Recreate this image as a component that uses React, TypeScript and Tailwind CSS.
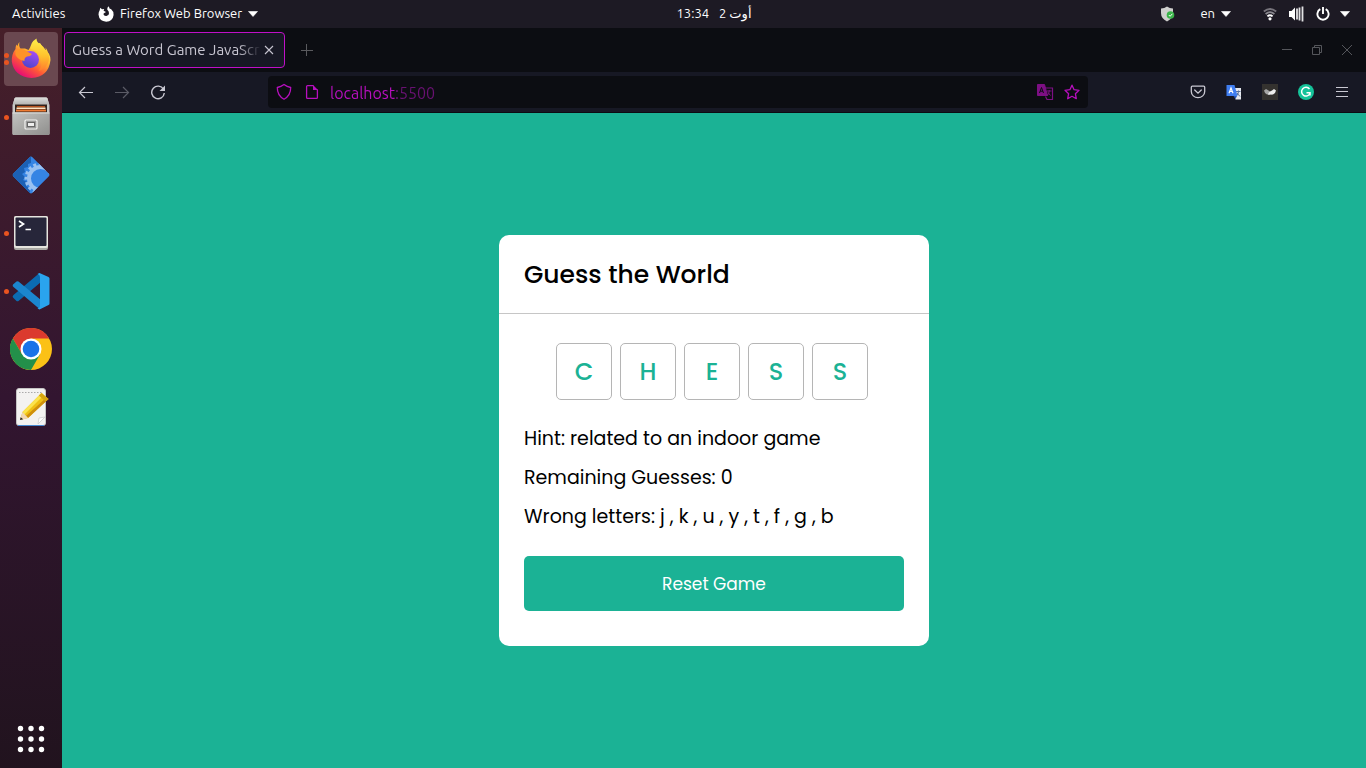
import React from "react";

const word = ["C", "H", "E", "S", "S"];
const wrongLetters = ["j", "k", "u", "y", "t", "f", "g", "b"];

function Caret() {
  return (
    <svg width="10" height="6" viewBox="0 0 10 6" aria-hidden="true">
      <path d="M0.5 0.5h9L5 5.5z" fill="#fff" stroke="#fff" strokeWidth="0.6" />
    </svg>
  );
}

function FirefoxGlyph() {
  return (
    <svg width="16" height="16" viewBox="0 0 16 16" aria-hidden="true">
      <path
        fill="#fff"
        d="M2.3 1.8 4 3.3 6.2 3 5.6 4.7 8 6 6 7.2Q5.2 7.5 5.7 8.7 6.5 10.2 8.4 10.1 11 9.8 11 7.2 11 5.2 9.3 3.8 9 2 10.3 0.2 11.5 1.5 11.7 2.7L13 3.1Q15.8 5.4 15.6 9 14.8 15.2 8.2 15.8 1.2 15.4 0.5 8.6 0.5 6 1.7 4.3z"
      />
    </svg>
  );
}

function FirefoxLogo() {
  return (
    <svg width="42" height="42" viewBox="0 0 42 42" aria-hidden="true">
      <defs>
        <linearGradient id="fxBody" x1="0.85" y1="0.1" x2="0.25" y2="0.95">
          <stop offset="0" stopColor="#fff44f" />
          <stop offset="0.35" stopColor="#ffb22e" />
          <stop offset="0.65" stopColor="#ff5a36" />
          <stop offset="1" stopColor="#e60a76" />
        </linearGradient>
        <linearGradient id="fxTail" x1="0.5" y1="0" x2="0.5" y2="1">
          <stop offset="0" stopColor="#fff14a" />
          <stop offset="0.55" stopColor="#ffc02c" />
          <stop offset="1" stopColor="#ff7a2e" />
        </linearGradient>
        <linearGradient id="fxGlobe" x1="0.7" y1="0" x2="0.3" y2="1">
          <stop offset="0" stopColor="#a64cf5" />
          <stop offset="1" stopColor="#4b45c9" />
        </linearGradient>
      </defs>
      <path
        d="M9.500 4Q8.500 8 10.500 10.500L15 10.500 18.500 12 21 8 30 5 34 11Q40.500 15 40.500 22 38.500 39 21.500 40 4 38.500 1.800 23.500 1.500 16 5.500 11 5.500 8.500 6.500 6.500L7.500 8Q8 5.500 9.500 4z"
        fill="url(#fxBody)"
      />
      <path
        d="M26.500 0.500Q20 4.500 20.500 11 29 12 31.500 20 33 27 28.500 33 37 31 39 22 39.500 15 35.500 9.500L36 12.500Q33 8 30 6 26.500 4 26.500 0.500z"
        fill="url(#fxTail)"
      />
      <circle cx="20.500" cy="21.500" r="8.500" fill="url(#fxGlobe)" />
      <path d="M5.500 12Q12 9.500 17 13.500L22 16Q20.500 18.500 17 18.500 14 19.500 14.500 23 8 22 5.500 17z" fill="#ff9328" />
    </svg>
  );
}

function FilesLogo() {
  return (
    <svg width="42" height="42" viewBox="0 0 42 42" aria-hidden="true">
      <defs>
        <linearGradient id="cabTop" x1="0" y1="0" x2="0" y2="1">
          <stop offset="0" stopColor="#dededc" />
          <stop offset="1" stopColor="#b4b4b2" />
        </linearGradient>
        <linearGradient id="cabFront" x1="0" y1="0" x2="1" y2="1">
          <stop offset="0" stopColor="#c2c2c0" />
          <stop offset="1" stopColor="#8f8f8d" />
        </linearGradient>
      </defs>
      <path d="M4.500 2.500q0.300-1 1.500-1h30q1.200 0 1.500 1L39.500 9v28.500q0 1.500-1.500 1.500H4q-1.500 0-1.500-1.500V9z" fill="#c9c9c7" />
      <path d="M4.500 2.500q0.300-1 1.500-1h30q1.200 0 1.500 1L39 8.500H3z" fill="url(#cabTop)" />
      <path d="M5 8.500h32v8H5z" fill="#33231d" />
      <path d="M7 10h28v1.500H7z" fill="#b8541f" />
      <path d="M6.500 11.500h29V13h-29z" fill="#ffe3c0" />
      <path d="M6 13.500h30v2H6z" fill="#ef7b33" />
      <path d="M2.500 16.500h37v21q0 1.500-1.500 1.500H4q-1.500 0-1.500-1.500z" fill="url(#cabFront)" />
      <path d="M2.500 16.500h37v1h-37z" fill="#dededc" />
      <rect x="15" y="24" width="12" height="9" rx="1" fill="#999" stroke="#f4f4f2" strokeWidth="1.200" />
      <rect x="17.500" y="26.500" width="7" height="4" fill="#eee" stroke="#666" />
    </svg>
  );
}

function GearDiamondLogo() {
  return (
    <svg width="42" height="42" viewBox="0 0 42 42" aria-hidden="true">
      <defs>
        <clipPath id="diamond">
          <rect x="7.500" y="7.500" width="27" height="27" rx="2" transform="rotate(45 21 21)" />
        </clipPath>
      </defs>
      <g clipPath="url(#diamond)">
        <rect width="42" height="42" fill="#3584e4" />
        <path d="M0 0h21v9l-3 1v3l-4 1 1 4-3 2 3 3-2 3 4 2-1 4 4 2v8H0z" fill="#1c61b5" />
        <circle cx="30.500" cy="24.500" r="11.500" fill="none" stroke="#99c1f1" strokeWidth="4" />
        <circle cx="30.500" cy="24.500" r="14.500" fill="none" stroke="#99c1f1" strokeWidth="3" strokeDasharray="3 2.500" />
      </g>
    </svg>
  );
}

function TerminalLogo() {
  return (
    <svg width="42" height="42" viewBox="0 0 42 42" aria-hidden="true">
      <rect x="4" y="4" width="34" height="34" rx="2" fill="#aaa9a4" />
      <rect x="4" y="4" width="34" height="32" rx="2" fill="#e6e5df" />
      <rect x="5.500" y="5.500" width="31" height="28.500" rx="1" fill="#27263a" />
      <path d="M9 9 13.500 12 9 15M15.500 17.500h5.500" fill="none" stroke="#fff" strokeWidth="1.700" />
    </svg>
  );
}

function CodeLogo() {
  return (
    <svg width="42" height="42" viewBox="0 0 42 42" aria-hidden="true">
      <path d="M6.500 31 3 27.500Q2 26 3.500 25L29.500 3 31 12 8.500 31Q7.500 31.500 6.500 31z" fill="#0b6bb1" />
      <path d="M6.500 11.500 3 14.500Q2 16 3.500 17L29.500 39 31 30 8.500 11.500Q7.500 11 6.500 11.500z" fill="#1b86cf" />
      <path d="M29.500 3 38.500 7q1 0.500 1 1.500v25q0 1-1 1.500L29.500 39.500 27.500 38.500Q30 38 30 34.500V8Q30 4.500 27.500 4z" fill="#2aa4ee" />
    </svg>
  );
}

function ChromeLogo() {
  return (
    <svg width="42" height="42" viewBox="0 0 42 42" aria-hidden="true">
      <circle cx="21" cy="21" r="21" fill="#fbc116" />
      <path d="M2.800 10.500A21 21 0 0 1 39.200 10.500L21 10.500 12 26.300z" fill="#db3a2e" />
      <path d="M2.800 10.500A21 21 0 0 0 21 42L30.100 26.300 21 21 12 26.300z" fill="#23904a" />
      <circle cx="21" cy="21" r="10.500" fill="#fff" />
      <circle cx="21" cy="21" r="8.300" fill="#1a73e8" />
    </svg>
  );
}

function NotesLogo() {
  return (
    <svg width="42" height="42" viewBox="0 0 42 42" aria-hidden="true">
      <rect x="6.500" y="2.500" width="29" height="37" rx="2.500" fill="#f3f2f1" stroke="#c5c4c4" />
      <path d="M8 39.500h26" stroke="#4688d1" />
      <path d="M9 6.500h24" stroke="#aaa" strokeDasharray="1.500 1.500" />
      <path d="M28 38l1-6 6-1z" fill="#fff" stroke="#c8c8c8" strokeWidth="0.700" />
      <path d="M31.500 7 38.500 13 18 32 10 34 12.500 26z" fill="#efbf14" />
      <path d="M31.500 7 34 9 14.500 28.500 12.500 26z" fill="#fbe34c" />
      <path d="M36.500 11.500 38.500 13 18 32 16 30z" fill="#cf8f0d" />
      <path d="M31.500 7 38.500 13 35.500 15.500 28.800 9.500z" fill="#d7a611" />
      <path d="M12.500 26 18 32 10 34z" fill="#f0d6b5" />
      <path d="M10.700 31.300 13.200 33.200 10 34z" fill="#222" />
    </svg>
  );
}

const dock = [
  { name: "Firefox Web Browser", Logo: FirefoxLogo, windows: 2 },
  { name: "Files", Logo: FilesLogo, windows: 1 },
  { name: "Package tool", Logo: GearDiamondLogo, windows: 0 },
  { name: "Terminal", Logo: TerminalLogo, windows: 1 },
  { name: "Visual Studio Code", Logo: CodeLogo, windows: 1 },
  { name: "Google Chrome", Logo: ChromeLogo, windows: 0 },
  { name: "Text Editor", Logo: NotesLogo, windows: 0 },
];

function TopBar() {
  return (
    <header className="flex h-7 shrink-0 items-center bg-[#1d1a24] text-[13px] text-white">
      <div className="w-[62px]">
        <button className="pl-3">Activities</button>
      </div>
      <div className="flex flex-1 basis-0">
        <button className="ml-9 flex items-center gap-1.5">
          <FirefoxGlyph />
          <span>Firefox Web Browser</span>
          <Caret />
        </button>
      </div>
      <button className="flex gap-2.5">
        <span>13:34</span>
        <span>2 أوت</span>
      </button>
      <div className="flex flex-1 basis-0 items-center justify-end">
        <svg className="mr-6" width="16" height="16" viewBox="0 0 16 16" aria-hidden="true">
          <path d="M7 0.500Q9.500 2.500 13 2.500V7q0 5.500-6 8.500Q1 12.500 1 7V2.500Q4.500 2.500 7 0.500z" fill="#cfcfcd" />
          <circle cx="10.500" cy="9" r="3.800" fill="#3bb54a" />
          <path d="M8.800 9 10.100 10.300 12.400 7.800" fill="none" stroke="#fff" />
        </svg>
        <button className="mr-8 flex items-center gap-1.5">
          <span>en</span>
          <Caret />
        </button>
        <button className="mr-4 flex items-center gap-2.5" aria-label="System menu">
          <span className="flex items-center gap-3">
            <svg width="14" height="14" viewBox="0 0 14 14" aria-hidden="true">
              <path d="M0.800 4.500Q7 -0.500 13.200 4.500" fill="none" stroke="#77747c" strokeWidth="1.800" />
              <path d="M2.600 7Q7 3.200 11.400 7" fill="none" stroke="#8b8990" strokeWidth="1.800" />
              <path d="M4.400 9.400Q7 7 9.600 9.400" fill="none" stroke="#fff" strokeWidth="1.800" />
              <circle cx="7" cy="11.800" r="1.600" fill="#fff" />
            </svg>
            <svg width="15" height="16" viewBox="0 0 15 16" aria-hidden="true">
              <path d="M0 5h2.500L6 1.500v13L2.500 11H0z" fill="#fff" />
              <path d="M8 2.500v11M10.500 1.500v13M13.500 0.500v15" stroke="#e2e2e4" strokeWidth="1.800" />
            </svg>
            <svg width="14" height="14" viewBox="0 0 14 14" aria-hidden="true">
              <path d="M4.300 2.200A5.600 5.600 0 1 0 9.700 2.200M7 0v7" fill="none" stroke="#fff" strokeWidth="1.900" />
            </svg>
          </span>
          <Caret />
        </button>
      </div>
    </header>
  );
}

function Dock() {
  return (
    <nav
      aria-label="Dock"
      className="flex w-[62px] shrink-0 flex-col items-start gap-1 bg-linear-to-b from-[#461f29] via-[#321530] to-[#21131e] px-1 pt-1 pb-0.5"
    >
      {dock.map(({ name, Logo, windows }, i) => (
        <button
          key={name}
          aria-label={name}
          className={
            i === 0
              ? "relative flex size-[54px] items-center justify-center rounded bg-[#6a4850]"
              : "relative flex size-[54px] items-center justify-center rounded"
          }
        >
          <span className="absolute inset-y-0 left-0 flex flex-col items-center justify-center gap-0.5">
            {Array.from({ length: windows }, (_, n) => (
              <span key={n} className="size-[5px] rounded-full bg-[#e95420]" />
            ))}
          </span>
          <Logo />
        </button>
      ))}
      <button aria-label="Show Applications" className="mt-auto flex size-[54px] items-center justify-center">
        <svg width="28" height="28" viewBox="0 0 28 28" fill="#fff" aria-hidden="true">
          {[3.5, 14, 24.5].map((y) =>
            [3.5, 14, 24.5].map((x) => <circle key={`${x}-${y}`} cx={x} cy={y} r="2.700" />)
          )}
        </svg>
      </button>
    </nav>
  );
}

function TabStrip() {
  return (
    <div className="flex h-11 shrink-0 items-center bg-[#0c0d12] pl-0.5 text-[15px]">
      <div className="flex h-9 w-[221px] items-center rounded border border-[#c010c8] bg-[#171824] pl-[7px] text-[#c7c5d0]">
        <span className="w-[189px] overflow-hidden pt-px whitespace-nowrap mask-r-from-88% mask-r-to-100%">
          Guess a Word Game JavaScript
        </span>
        <button aria-label="Close tab" className="flex size-4 items-center justify-center">
          <svg width="10" height="10" viewBox="0 0 10 10" stroke="#c7c5d0" strokeWidth="1.100" aria-hidden="true">
            <path d="M1 1l8 8M9 1l-8 8" />
          </svg>
        </button>
      </div>
      <button aria-label="New tab" className="ml-3.5 flex size-4 items-center justify-center">
        <svg width="12" height="12" viewBox="0 0 12 12" stroke="#5a5a5e" aria-hidden="true">
          <path d="M5.500 0v12M0 6.500h12" />
        </svg>
      </button>
      <div className="ml-auto flex items-center gap-5 pr-3.5">
        <button aria-label="Minimize">
          <svg width="10" height="10" viewBox="0 0 10 10" stroke="#55565b" aria-hidden="true">
            <path d="M0 4.500h10" />
          </svg>
        </button>
        <button aria-label="Restore">
          <svg width="10" height="10" viewBox="0 0 10 10" fill="none" stroke="#55565b" aria-hidden="true">
            <path d="M0.500 2.500h7v7h-7zM2.500 2.500v-2h7v7h-2" />
          </svg>
        </button>
        <button aria-label="Close">
          <svg width="10" height="10" viewBox="0 0 10 10" stroke="#55565b" aria-hidden="true">
            <path d="M0 0l10 10M10 0L0 10" />
          </svg>
        </button>
      </div>
    </div>
  );
}

function ToolButton({ label, children }: { label: string; children: React.ReactNode }) {
  return (
    <button aria-label={label} className="flex h-8 w-9 items-center justify-center">
      {children}
    </button>
  );
}

function Toolbar() {
  return (
    <div className="flex h-[41px] shrink-0 items-center border-b border-[#0b0c12] bg-[#171824] px-1.5">
      <ToolButton label="Back">
        <svg width="16" height="16" viewBox="0 0 16 16" fill="none" stroke="#c9c8d2" strokeWidth="1.200" aria-hidden="true">
          <path d="M15 8.500H1.500M7 3 1.500 8.500 7 14" />
        </svg>
      </ToolButton>
      <ToolButton label="Forward">
        <svg width="16" height="16" viewBox="0 0 16 16" fill="none" stroke="#5b5b66" strokeWidth="1.200" aria-hidden="true">
          <path d="M1 8.500h13.500M9 3l5.500 5.500L9 14" />
        </svg>
      </ToolButton>
      <ToolButton label="Reload">
        <svg width="16" height="16" viewBox="0 0 16 16" fill="none" stroke="#c9c8d2" strokeWidth="1.400" aria-hidden="true">
          <path d="M13.500 5.300A6.300 6.300 0 1 0 14.300 9" />
          <path d="M15 1.500v5.500H9.500z" fill="#c9c8d2" stroke="none" />
        </svg>
      </ToolButton>

      <div className="mx-[92px] flex h-8 flex-1 items-center rounded bg-[#0c0d12] px-2 text-[#b80fbf]">
        <svg width="16" height="18" viewBox="0 0 16 18" fill="none" stroke="currentColor" strokeWidth="1.300" aria-hidden="true">
          <path d="M8 1.500Q11 3.800 14.700 4.500 14.800 12.500 8 16.200 1.200 12.500 1.300 4.500 5 3.800 8 1.500z" strokeLinejoin="round" />
        </svg>
        <svg className="ml-3" width="16" height="16" viewBox="0 0 16 16" fill="none" stroke="currentColor" strokeWidth="1.300" aria-hidden="true">
          <path d="M9.500 1.600H3.500q-0.900 0-0.900 0.900v11q0 0.900 0.900 0.900h9q0.900 0 0.900-0.900V5.500" />
          <path d="M9 1l5 5H9z" fill="currentColor" stroke="none" />
        </svg>
        <input
          aria-label="Address"
          defaultValue="localhost:5500"
          spellCheck={false}
          className="ml-2.5 h-6 min-w-0 flex-1 bg-linear-to-r from-[#b80fbf] from-[65px] to-[#6a1173] to-[65px] bg-clip-text pt-px text-base text-transparent outline-none"
        />
        <svg width="18" height="18" viewBox="0 0 18 18" aria-hidden="true">
          <path d="M1.500 1.500h7l3 11h-10z" fill="#7d0f84" stroke="#7d0f84" />
          <path d="M8 5h8.500v11.500H11l-1.500-3" fill="none" stroke="#7d0f84" strokeWidth="1.200" />
          <path d="M3.500 10 5.500 4.500 7.500 10M4.200 8.200h2.600" fill="none" stroke="#0c0d12" />
          <path d="M11 8h4.500M13.200 7v1q0 3-2 4.500M12 9.500l2.500 3" fill="none" stroke="#7d0f84" />
        </svg>
        <button aria-label="Bookmark this page" className="ml-2.5">
          <svg width="16" height="16" viewBox="0 0 16 16" fill="none" stroke="currentColor" strokeWidth="1.300" strokeLinejoin="round" aria-hidden="true">
            <path d="M8 1.200 10.100 5.700 15 6.300 11.400 9.700 12.300 14.700 8 12.300 3.700 14.700 4.600 9.700 1 6.300 5.900 5.700z" />
          </svg>
        </button>
      </div>

      <ToolButton label="Save to Pocket">
        <svg width="16" height="16" viewBox="0 0 16 16" fill="none" stroke="#c9c8d2" strokeWidth="1.300" aria-hidden="true">
          <path d="M2.300 2.200h11.400q1 0 1 1V7.500a6.700 6.200 0 0 1-13.400 0V3.200q0-1 1-1z" />
          <path d="M4.700 6 8 9.200 11.300 6" strokeLinecap="round" />
        </svg>
      </ToolButton>
      <ToolButton label="Translate">
        <svg width="16" height="16" viewBox="0 0 16 16" aria-hidden="true">
          <path d="M7 4h8v11.500H9.500z" fill="#e6e8ee" />
          <path d="M10 7.500h4.500M12.500 6.500v1q0 3-2.500 4.500M11 9l3 3.500" fill="none" stroke="#56709e" />
          <path d="M0.500 1h8l3 11H0.500z" fill="#3f7df0" />
          <path d="M3 9.200 5 3.800 7 9.200M3.700 7.400h2.600" fill="none" stroke="#fff" strokeWidth="1.100" />
          <path d="M7.500 12H11l-1.500 3z" fill="#2857b8" />
        </svg>
      </ToolButton>
      <ToolButton label="Extension">
        <svg width="16" height="16" viewBox="0 0 16 16" aria-hidden="true">
          <rect width="16" height="16" fill="#34322f" />
          <path d="M2 6.500 4 5 6.500 6.500 8 7.500 8 10.500 5 10.500 3 9z" fill="#a5a5a5" />
          <path d="M8 7.500 10 6.500 12 5 14 6.500 13 9 11 10.500 6 10.800 6.500 9z" fill="#ededed" />
        </svg>
      </ToolButton>
      <ToolButton label="Grammarly">
        <svg width="16" height="16" viewBox="0 0 16 16" aria-hidden="true">
          <circle cx="8" cy="8" r="8" fill="#15c39a" />
          <path d="M11.500 5A4.400 4.400 0 1 0 12 9.500M8.500 8.700H12V11.500" fill="none" stroke="#fff" strokeWidth="1.500" />
        </svg>
      </ToolButton>
      <ToolButton label="Open application menu">
        <svg width="12" height="12" viewBox="0 0 12 12" stroke="#c9c8d2" aria-hidden="true">
          <path d="M0 1.500h12M0 5.500h12M0 10.500h12" />
        </svg>
      </ToolButton>
    </div>
  );
}

function Game() {
  return (
    <section className="w-[430px] rounded-[10px] bg-white font-['Poppins','Inter',sans-serif] text-black">
      <h1 className="border-b border-[#c6c6c6] px-[25px] pt-[21px] pb-[19px] text-[25px] leading-[38px] font-medium">
        Guess the World
      </h1>
      <div className="px-[25px] pt-[29px] pb-[35px]">
        <div className="flex justify-center gap-2 pr-1">
          {word.map((letter, i) => (
            <input
              key={i}
              aria-label={`Letter ${i + 1}`}
              defaultValue={letter}
              maxLength={1}
              disabled
              className="h-[57px] w-14 rounded-[5px] border border-[#b5b5b5] text-center text-2xl font-medium text-[#1bb295] uppercase"
            />
          ))}
        </div>
        <div className="mt-6 flex flex-col gap-2.5 text-[19px] leading-[29px]">
          <p>Hint: related to an indoor game</p>
          <p>Remaining Guesses: 0</p>
          <p>Wrong letters: {wrongLetters.join(" , ")}</p>
        </div>
        <button className="mt-[25px] h-[55px] w-full rounded-[5px] bg-[#1bb295] pt-0.5 text-[17px] text-white">Reset Game</button>
      </div>
    </section>
  );
}

export default function App() {
  return (
    <div className="flex min-h-screen flex-col font-['Ubuntu','Noto_Sans','DejaVu_Sans',sans-serif]">
      <TopBar />
      <div className="flex flex-1">
        <Dock />
        <div className="flex min-w-0 flex-1 flex-col">
          <TabStrip />
          <Toolbar />
          <main className="flex flex-1 items-center justify-center bg-[#1bb295]">
            <Game />
          </main>
        </div>
      </div>
    </div>
  );
}
